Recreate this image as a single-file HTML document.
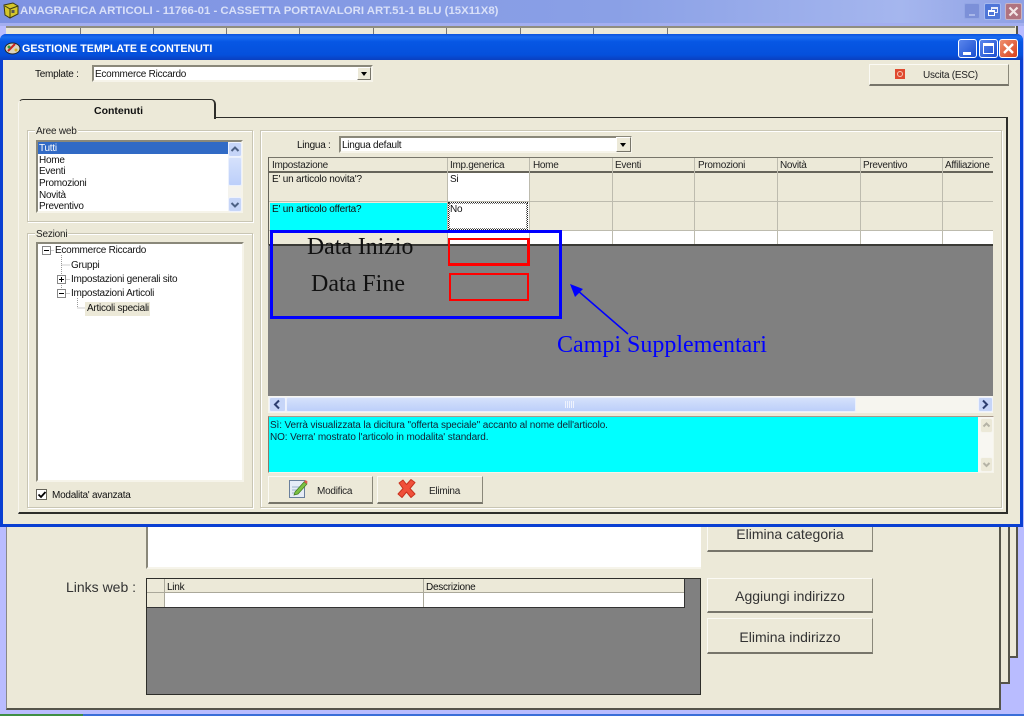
<!DOCTYPE html>
<html><head><meta charset="utf-8">
<style>
html,body{margin:0;padding:0;width:1024px;height:716px;overflow:hidden;background:#b9bcff}
#r{position:relative;width:1024px;height:716px;overflow:hidden;font-family:"Liberation Sans",sans-serif;font-size:10px;color:#111}
.a{position:absolute;box-sizing:border-box}
.t{position:absolute;white-space:nowrap;line-height:12px;letter-spacing:-.25px}
.panel{background:#ece9d8;border-right:2px solid #55544a;border-bottom:2px solid #55544a;border-left:1px solid #888}
.btn{position:absolute;box-sizing:border-box;background:#ece9d8;border:1px solid;border-color:#fbfaf4 #8a887a #77756a #fbfaf4;border-bottom-width:2px;text-align:center}
.grp{position:absolute;box-sizing:border-box;border:1px solid #c9c6b4;box-shadow:inset 1px 1px 0 #fff,1px 1px 0 #fff}
.lg{position:absolute;background:#ece9d8;padding:0 1px;line-height:11px;font-size:10px;color:#222;letter-spacing:-.2px}
.sunk{position:absolute;box-sizing:border-box;background:#fff;border:1px solid;border-color:#8a887a #f6f4ea #f6f4ea #8a887a;border-width:2px 2px 2px 2px}
.sb{position:absolute;box-sizing:border-box;background:linear-gradient(#d5e1fb,#bccffa);border:1px solid #eaf0fd;border-radius:2px}
.v{position:absolute;width:1px;background:#bdbbae}
.h{position:absolute;height:1px;background:#bdbbae}
.hd{position:absolute;top:159px;line-height:12px;font-size:10px;color:#222;white-space:nowrap;letter-spacing:-.3px}
</style></head><body><div id="r">

<!-- outer titlebar -->
<div class="a" style="left:0;top:0;width:1024px;height:23px;background:linear-gradient(90deg,#7d92e2 0%,#8aa0e6 60%,#a5b6ee 88%,#8ea0e4 100%)"></div>
<div class="a" style="left:0;top:23px;width:1024px;height:3px;background:#a3aef0"></div>
<svg class="a" style="left:2px;top:2px" width="18" height="17" viewBox="0 0 18 17"><path d="M2 3 L11 1 L16 4 L16 12 L8 16 L3 13Z" fill="#d4c62a" stroke="#3c3a10"/><path d="M8 7 L16 4 M8 7 L8 16 M8 7 L3 4" stroke="#3c3a10" fill="none"/><rect x="9.500" y="8" width="3" height="3" fill="#555"/></svg>
<div class="t" style="left:20px;top:4px;font:bold 11.400px/15px 'Liberation Sans',sans-serif;color:#d9e0f8;letter-spacing:0">ANAGRAFICA ARTICOLI - 11766-01 - CASSETTA PORTAVALORI ART.51-1 BLU (15X11X8)</div>
<div class="a" style="left:964px;top:3px;width:16px;height:16px;background:#7c90d8;border-radius:2px;border:1px solid #93a6e4"><div class="a" style="left:4px;top:10px;width:6px;height:2px;background:#a9b8ea"></div></div>
<div class="a" style="left:984px;top:3px;width:17px;height:17px;background:#4f76d8;border-radius:2px;border:1px solid #a5b9ee"><div class="a" style="left:6px;top:3px;width:7px;height:6px;border:1px solid #e6ecfb;border-top-width:2px"></div><div class="a" style="left:3px;top:6px;width:7px;height:6px;border:1px solid #fff;border-top-width:2px;background:#4f76d8"></div></div>
<div class="a" style="left:1005px;top:3px;width:17px;height:17px;background:#b0737f;border-radius:2px;border:1px solid #c9b3c2"><svg class="a" style="left:2px;top:2px" width="11" height="11"><path d="M1.500 1.500L9.500 9.500M9.500 1.500L1.500 9.500" stroke="#f3e6e6" stroke-width="2.200"/></svg></div>

<!-- stacked back windows -->
<div class="a panel" style="left:10px;top:26px;width:1008px;height:632px"></div>
<div class="a panel" style="left:8px;top:26px;width:1002px;height:658px"></div>
<div class="a panel" style="left:6px;top:26px;width:995px;height:684px"></div>
<div class="a" style="left:6px;top:28px;width:1009px;height:8px;background:#ece9d8"></div>
<div class="a" style="left:6px;top:26px;width:1009px;height:2px;background:#8f8d80"></div>
<div class="v" style="left:80px;top:28px;height:8px;background:#777"></div>
<div class="v" style="left:153px;top:28px;height:8px;background:#777"></div>
<div class="v" style="left:226px;top:28px;height:8px;background:#777"></div>
<div class="v" style="left:299px;top:28px;height:8px;background:#777"></div>
<div class="v" style="left:373px;top:28px;height:8px;background:#777"></div>
<div class="v" style="left:446px;top:28px;height:8px;background:#777"></div>
<div class="v" style="left:520px;top:28px;height:8px;background:#777"></div>
<div class="v" style="left:593px;top:28px;height:8px;background:#777"></div>
<div class="v" style="left:667px;top:28px;height:8px;background:#777"></div>

<!-- back form lower -->
<div class="a" style="left:146px;top:520px;width:555px;height:49px;background:#fff;border-left:2px solid #8a887a;border-bottom:2px solid #f6f4ea"></div>
<div class="btn" style="left:707px;top:515px;width:166px;height:37px;font-size:14px;line-height:37px;color:#333">Elimina categoria</div>
<div class="t" style="left:66px;top:578px;font-size:14px;line-height:18px;color:#333;letter-spacing:0">Links web :</div>
<div class="a" style="left:146px;top:578px;width:555px;height:117px;background:#808080;border:1px solid #2e2e2a"></div>
<div class="a" style="left:147px;top:579px;width:537px;height:14px;background:#ece9d8"></div>
<div class="a" style="left:147px;top:593px;width:537px;height:14px;background:#fff"></div>
<div class="a" style="left:147px;top:593px;width:17px;height:14px;background:#ece9d8"></div>
<div class="h" style="left:147px;top:592px;width:537px;background:#aaa89a"></div>
<div class="v" style="left:164px;top:579px;height:28px;background:#aaa89a"></div>
<div class="v" style="left:423px;top:579px;height:28px;background:#aaa89a"></div>
<div class="a" style="left:147px;top:607px;width:537px;height:1px;background:#333"></div>
<div class="v" style="left:684px;top:578px;height:30px;background:#333"></div>
<div class="t" style="left:167px;top:582px">Link</div>
<div class="t" style="left:426px;top:582px">Descrizione</div>
<div class="btn" style="left:707px;top:578px;width:166px;height:35px;font-size:14px;line-height:35px;color:#333">Aggiungi indirizzo</div>
<div class="btn" style="left:707px;top:618px;width:166px;height:36px;font-size:14px;line-height:36px;color:#333">Elimina indirizzo</div>

<!-- taskbar -->
<div class="a" style="left:0;top:714px;width:1024px;height:2px;background:#3a6ed8"></div>
<div class="a" style="left:0;top:714px;width:83px;height:2px;background:#3f8f45"></div>

<!-- main dialog -->
<div class="a" style="left:0;top:34px;width:1023px;height:493px;background:#ece9d8;border:3px solid #0a3fd2;border-top:0;border-radius:6px 6px 0 0"></div>
<div class="a" style="left:0;top:34px;width:1023px;height:26px;background:linear-gradient(#0a52dc 0%,#1a6cf0 12%,#0757e4 30%,#0550dc 80%,#0a3fc0 100%);border-radius:6px 6px 0 0"></div>
<svg class="a" style="left:4px;top:42px" width="17" height="13" viewBox="0 0 17 13"><ellipse cx="8.500" cy="6.500" rx="7.500" ry="5.500" fill="#d8d4c0" stroke="#222"/><path d="M4 9L11 2" stroke="#c22" stroke-width="2"/><circle cx="5" cy="5" r="1.500" fill="#2a9a3a"/><circle cx="12" cy="8" r="1.500" fill="#d8b020"/></svg>
<div class="t" style="left:22px;top:42px;font:bold 10.700px/15px 'Liberation Sans',sans-serif;color:#fff;letter-spacing:0">GESTIONE TEMPLATE E CONTENUTI</div>
<div class="a" style="left:958px;top:39px;width:19px;height:19px;border:1px solid #fff;border-radius:3px;background:linear-gradient(135deg,#5a86ec,#1c4fd0)"><div class="a" style="left:4px;top:12px;width:8px;height:3px;background:#fff"></div></div>
<div class="a" style="left:979px;top:39px;width:19px;height:19px;border:1px solid #fff;border-radius:3px;background:linear-gradient(135deg,#5a86ec,#1c4fd0)"><div class="a" style="left:3px;top:3px;width:11px;height:11px;border:1px solid #fff;border-top-width:3px"></div></div>
<div class="a" style="left:999px;top:39px;width:19px;height:19px;border:1px solid #fff;border-radius:3px;background:linear-gradient(135deg,#ee9070,#d8401c)"><svg class="a" style="left:3px;top:3px" width="11" height="11"><path d="M1 1L10 10M10 1L1 10" stroke="#fff" stroke-width="2.400"/></svg></div>

<!-- template row -->
<div class="t" style="left:35px;top:69px">Template :</div>
<div class="sunk" style="left:92px;top:65px;width:281px;height:17px"></div>
<div class="t" style="left:95px;top:69px">Ecommerce Riccardo</div>
<div class="a" style="left:357px;top:67px;width:14px;height:13px;background:#ece9d8;border:1px solid;border-color:#fff #77756a #77756a #fff"><div class="a" style="left:3px;top:4px;border:3px solid transparent;border-top:4px solid #000;border-bottom:0"></div></div>
<div class="btn" style="left:869px;top:64px;width:140px;height:22px"></div>
<div class="a" style="left:895px;top:69px;width:10px;height:10px;background:#e04a30"><div class="a" style="left:2px;top:2px;width:6px;height:6px;border:1px solid #f6c8b8;border-radius:50%"></div></div>
<div class="t" style="left:923px;top:70px;color:#222">Uscita (ESC)</div>

<!-- tab -->
<div class="a" style="left:18px;top:117px;width:990px;height:397px;border:1px solid #2e2e2a;border-width:1px 2px 2px 1px;border-color:#2e2e2a;border-left-color:#f8f6ee;background:#ece9d8"></div>
<div class="a" style="left:18px;top:99px;width:198px;height:20px;background:#ece9d8;border:1px solid #2e2e2a;border-bottom:0;border-left-color:#f8f6ee;border-right-width:2px;border-radius:5px 5px 0 0"></div>
<div class="t" style="left:94px;top:105px;font-weight:bold;font-size:10.500px;color:#111;letter-spacing:0">Contenuti</div>

<!-- left inner frame -->
<div class="grp" style="left:27px;top:130px;width:226px;height:92px"></div>
<div class="lg" style="left:35px;top:126px">Aree web</div>
<div class="sunk" style="left:36px;top:140px;width:207px;height:73px"></div>
<div class="a" style="left:38px;top:142px;width:190px;height:12px;background:#316ac5"></div>
<div class="t" style="left:39px;top:143px;color:#fff">Tutti</div>
<div class="t" style="left:39px;top:155px">Home</div>
<div class="t" style="left:39px;top:166px">Eventi</div>
<div class="t" style="left:39px;top:178px">Promozioni</div>
<div class="t" style="left:39px;top:190px">Novità</div>
<div class="t" style="left:39px;top:201px">Preventivo</div>
<div class="a" style="left:228px;top:142px;width:13px;height:69px;background:#f4f3ee"></div>
<svg class="a" style="left:228px;top:142px" width="14" height="15"><rect x=".5" y=".5" width="13" height="14" rx="2" fill="#c6d5f8" stroke="#eef2fd"/><path d="M3.500 9L7 5.500L10.500 9" stroke="#4d6185" stroke-width="2" fill="none"/></svg>
<div class="sb" style="left:228px;top:157px;width:14px;height:29px"></div>
<svg class="a" style="left:228px;top:197px" width="14" height="15"><rect x=".5" y=".5" width="13" height="14" rx="2" fill="#c6d5f8" stroke="#eef2fd"/><path d="M3.500 6L7 9.500L10.500 6" stroke="#4d6185" stroke-width="2" fill="none"/></svg>

<div class="grp" style="left:27px;top:233px;width:226px;height:275px"></div>
<div class="lg" style="left:35px;top:229px">Sezioni</div>
<div class="sunk" style="left:36px;top:242px;width:208px;height:240px"></div>
<svg class="a" style="left:40px;top:245px" width="120" height="70" shape-rendering="crispEdges">
<g stroke="#999" fill="none" stroke-dasharray="1 1"><path d="M21.500 10V44M21.500 20H30M21.500 34.500H30M21.500 48.500H30M37.500 53V63H45M10.500 5.500H14"/></g>
<g fill="#fff" stroke="#888"><rect x="2.500" y="1.500" width="8" height="8"/><rect x="17.500" y="30.500" width="8" height="8"/><rect x="17.500" y="44.500" width="8" height="8"/></g>
<path d="M4 5.500H9M19 34.500H24M21.500 32V37M19 48.500H24" stroke="#000"/></svg>
<div class="t" style="left:55px;top:245px">Ecommerce Riccardo</div>
<div class="t" style="left:71px;top:260px">Gruppi</div>
<div class="t" style="left:71px;top:274px">Impostazioni generali sito</div>
<div class="t" style="left:71px;top:288px">Impostazioni Articoli</div>
<div class="a" style="left:85px;top:302px;width:65px;height:14px;background:#ece9d8"></div>
<div class="t" style="left:87px;top:303px">Articoli speciali</div>
<div class="a" style="left:36px;top:489px;width:11px;height:11px;background:#fff;border:1px solid #66645a"></div>
<svg class="a" style="left:37px;top:490px" width="10" height="10"><path d="M1.500 4.500L4 7L8.500 2" stroke="#000" stroke-width="1.800" fill="none"/></svg>
<div class="t" style="left:52px;top:490px">Modalita' avanzata</div>

<!-- right frame -->
<div class="grp" style="left:260px;top:130px;width:742px;height:378px"></div>
<div class="t" style="left:297px;top:140px">Lingua :</div>
<div class="sunk" style="left:339px;top:136px;width:293px;height:17px"></div>
<div class="t" style="left:342px;top:140px">Lingua default</div>
<div class="a" style="left:616px;top:137px;width:15px;height:15px;background:#ece9d8;border:1px solid;border-color:#fff #77756a #77756a #fff"><div class="a" style="left:3px;top:5px;border:3px solid transparent;border-top:4px solid #000;border-bottom:0"></div></div>

<!-- grid -->
<div class="a" style="left:268px;top:157px;width:725px;height:239px;background:#808080"></div>
<div class="a" style="left:268px;top:157px;width:725px;height:1px;background:#77756a"></div>
<div class="a" style="left:268px;top:157px;width:1px;height:88px;background:#66645a"></div>
<div class="a" style="left:269px;top:158px;width:724px;height:73px;background:#ece9d8"></div>
<div class="a" style="left:269px;top:231px;width:724px;height:13px;background:#fff"></div>
<div class="a" style="left:269px;top:231px;width:179px;height:13px;background:#ece9d8"></div>
<div class="a" style="left:269px;top:171px;width:724px;height:2px;background:#66645a"></div>
<div class="a" style="left:269px;top:244px;width:724px;height:2px;background:#3a3a36"></div>
<div class="a" style="left:448px;top:173px;width:81px;height:58px;background:#fff"></div>
<div class="a" style="left:270px;top:203px;width:178px;height:27px;background:#00ffff"></div>
<div class="h" style="left:269px;top:201px;width:724px"></div>
<div class="h" style="left:269px;top:230px;width:724px"></div>
<div class="v" style="left:447px;top:158px;height:86px"></div>
<div class="v" style="left:529px;top:158px;height:86px"></div>
<div class="v" style="left:612px;top:158px;height:86px"></div>
<div class="v" style="left:694px;top:158px;height:86px"></div>
<div class="v" style="left:777px;top:158px;height:86px"></div>
<div class="v" style="left:860px;top:158px;height:86px"></div>
<div class="v" style="left:942px;top:158px;height:86px"></div>
<div class="a" style="left:448px;top:202px;width:80px;height:28px;border:1px dotted #222;outline:1px dotted #777;outline-offset:-2px;background:#fff"></div>
<div class="hd" style="left:272px;top:160px">Impostazione</div>
<div class="hd" style="left:450px;top:160px">Imp.generica</div>
<div class="hd" style="left:533px;top:160px">Home</div>
<div class="hd" style="left:615px;top:160px">Eventi</div>
<div class="hd" style="left:698px;top:160px">Promozioni</div>
<div class="hd" style="left:780px;top:160px">Novità</div>
<div class="hd" style="left:863px;top:160px">Preventivo</div>
<div class="hd" style="left:945px;top:160px">Affiliazione</div>
<div class="t" style="left:272px;top:174px;letter-spacing:-.2px">E' un articolo novita'?</div>
<div class="t" style="left:450px;top:174px">Si</div>
<div class="t" style="left:272px;top:204px;letter-spacing:-.2px">E' un articolo offerta?</div>
<div class="t" style="left:450px;top:204px">No</div>

<!-- annotations -->
<div class="a" style="left:270px;top:230px;width:292px;height:89px;border:3px solid #0000ff"></div>
<div class="a" style="left:448px;top:238px;width:82px;height:28px;border:2px solid #ff0000;border-width:2px 3px 3px 2px"></div>
<div class="a" style="left:449px;top:273px;width:80px;height:28px;border:2px solid #ff0000"></div>
<div class="t" style="left:307px;top:235px;font:23.800px/24px 'Liberation Serif',serif;color:#111;letter-spacing:0">Data Inizio</div>
<div class="t" style="left:311px;top:272px;font:24px/24px 'Liberation Serif',serif;color:#111;letter-spacing:0">Data Fine</div>
<svg class="a" style="left:560px;top:275px" width="80" height="70"><path d="M68 59L17 15" stroke="#0000ff" stroke-width="1.500"/><path d="M10 9L23 14L15 22Z" fill="#0000ff"/></svg>
<div class="t" style="left:557px;top:332px;font:24px/26px 'Liberation Serif',serif;color:#0000ff;letter-spacing:0">Campi Supplementari</div>

<!-- hscroll -->
<div class="a" style="left:268px;top:396px;width:725px;height:17px;background:#f6f5ef"></div>
<div class="a" style="left:269px;top:397px;width:17px;height:15px;background:#c6d5f8;border:1px solid #eef2fd;border-radius:2px"></div>
<svg class="a" style="left:271px;top:399px" width="12" height="11"><path d="M8 1.500L4 5.500L8 9.500" stroke="#2e3f70" stroke-width="2" fill="none"/></svg>
<div class="sb" style="left:286px;top:397px;width:570px;height:15px"></div>
<svg class="a" style="left:565px;top:401px" width="10" height="7"><path d="M.5 0V7M2.500 0V7M4.500 0V7M6.500 0V7M8.500 0V7" stroke="#eef2fd"/></svg>
<div class="a" style="left:978px;top:397px;width:15px;height:15px;background:#c6d5f8;border:1px solid #eef2fd;border-radius:2px"></div>
<svg class="a" style="left:979px;top:399px" width="12" height="11"><path d="M4 1.500L8 5.500L4 9.500" stroke="#2e3f70" stroke-width="2" fill="none"/></svg>

<!-- description -->
<div class="a" style="left:268px;top:416px;width:726px;height:57px;background:#fff;border:1px solid;border-color:#a8988a #f6f4ea #f6f4ea #8a7a6a"></div>
<div class="a" style="left:269px;top:417px;width:709px;height:55px;background:#00ffff"></div>
<div class="t" style="left:270px;top:420px;color:#123;letter-spacing:-.12px">Sì: Verrà visualizzata la dicitura "offerta speciale" accanto al nome dell'articolo.</div>
<div class="t" style="left:270px;top:432px;color:#123;letter-spacing:-.12px">NO: Verra' mostrato l'articolo in modalita' standard.</div>
<div class="a" style="left:978px;top:417px;width:15px;height:55px;background:#f8f7f2"></div>
<svg class="a" style="left:980px;top:418px" width="13" height="15"><rect x=".5" y=".5" width="12" height="14" rx="2" fill="#ece9d8" stroke="#f6f5ef"/><path d="M3.500 8.500L6.500 5.500L9.500 8.500" stroke="#b5b3a6" stroke-width="2" fill="none"/></svg>
<svg class="a" style="left:980px;top:457px" width="13" height="15"><rect x=".5" y=".5" width="12" height="14" rx="2" fill="#ece9d8" stroke="#f6f5ef"/><path d="M3.500 6L6.500 9L9.500 6" stroke="#b5b3a6" stroke-width="2" fill="none"/></svg>

<!-- buttons -->
<div class="btn" style="left:268px;top:476px;width:105px;height:28px"></div>
<svg class="a" style="left:288px;top:478px" width="20" height="21"><rect x="1.500" y="2.500" width="15" height="17" fill="#e6ecf6" stroke="#6a7f9c"/><path d="M4 9H13M4 12H13M4 15H10" stroke="#9fb2cc"/><path d="M7 14L16 4L19 6L10 16L6 17Z" fill="#7cc142" stroke="#3f7a20" stroke-width=".7"/><path d="M16 4L17.500 2L19.500 3.500L19 6Z" fill="#e05a4a"/></svg>
<div class="t" style="left:317px;top:486px;color:#222">Modifica</div>
<div class="btn" style="left:377px;top:476px;width:106px;height:28px"></div>
<svg class="a" style="left:396px;top:478px" width="21" height="21"><path d="M3 5L7 2L10.500 6.500L15 1.500L19 4.500L14 10.500L19 16L15 19.500L10.500 14L6 19.500L2 16L7 10.500Z" fill="#f0503a" stroke="#c8321e" stroke-linejoin="round"/></svg>
<div class="t" style="left:429px;top:486px;color:#222">Elimina</div>

</div></body></html>
